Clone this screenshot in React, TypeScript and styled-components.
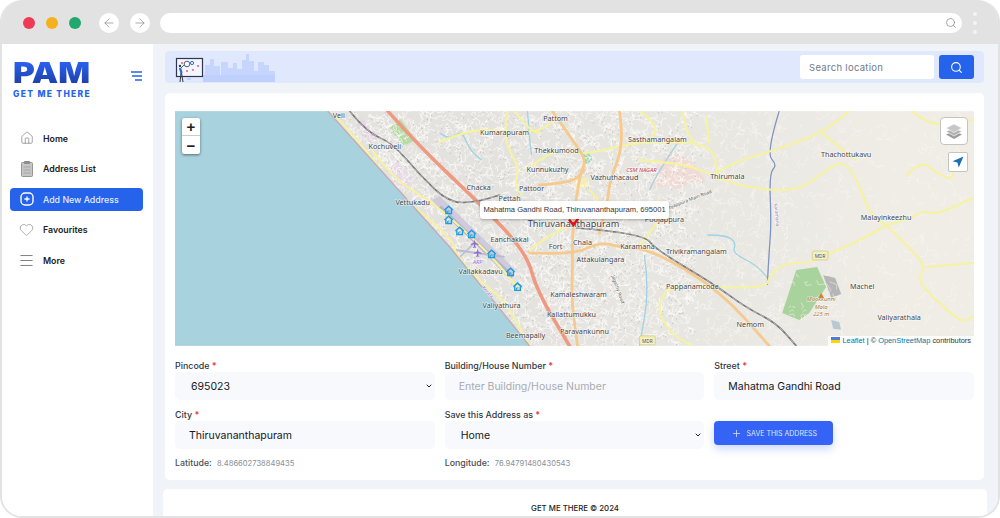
import React from "react";
import styled, { createGlobalStyle } from "styled-components";
import { ArrowLeft, ArrowRight, ChevronDown, Search, House, Heart, Menu, Plus } from "lucide-react";

const GlobalStyle = createGlobalStyle`
    html, body {
        margin: 0;
        padding: 0;
        background: #fff;
        font-family: "Inter", "Noto Sans", sans-serif;
    }
    * { box-sizing: border-box; }
`

type Pt = [number, number];

// smooth a list of points into a path
const smooth = (pts: Pt[]) => {
    let d = `M${pts[0][0]} ${pts[0][1]}`;
    for (let i = 1; i < pts.length - 1; i++) {
        const mx = (pts[i][0] + pts[i + 1][0]) / 2;
        const my = (pts[i][1] + pts[i + 1][1]) / 2;
        d += `Q${pts[i][0]} ${pts[i][1]} ${mx} ${my}`;
    }
    const last = pts[pts.length - 1];
    return d + `L${last[0]} ${last[1]}`;
};

// fake street web, seeded so every load looks the same
const makeStreets = () => {
    let seed = 4711;
    const rnd = () => {
        seed = (seed * 16807) % 2147483647;
        return seed / 2147483647;
    };
    let dense = "";
    let thin = "";
    let blocks = "";
    for (let i = 0; i < 6500; i++) {
        const x = 330 + rnd() * 645;
        const y = 111 + rnd() * 235;
        const coast = 153 + 175 + (y - 111) * 0.86;
        if (x < coast + 6) continue;
        const density = x < 690 ? 1 : x < 790 ? 0.5 : 0.16;
        if (rnd() > density) continue;
        const a = rnd() * Math.PI * 2;
        const len = 2 + rnd() * 6;
        const x2 = x + Math.cos(a) * len;
        const y2 = y + Math.sin(a) * len;
        const x3 = x2 + Math.cos(a + 1.3) * len * 0.6;
        const y3 = y2 + Math.sin(a + 1.3) * len * 0.6;
        const seg = `M${x.toFixed(1)} ${y.toFixed(1)}L${x2.toFixed(1)} ${y2.toFixed(1)}L${x3.toFixed(1)} ${y3.toFixed(1)}`;
        if (x < 700) dense += seg;
        else thin += seg;
        if (x < 700 && rnd() < 0.35) blocks += `M${x2.toFixed(1)} ${(y2 + 2).toFixed(1)}h1.2v1.2h-1.2z`;
    }
    return { dense, thin, blocks };
};

const streets = makeStreets();

const trunk: Pt[][] = [
    [[388, 111], [423, 150], [480, 203], [527, 253], [537, 290], [570, 346]],
];

const orange: Pt[][] = [
    [[553, 111], [573, 140], [587, 160], [580, 175], [573, 227], [573, 270], [572, 300], [578, 346]],
    [[620, 111], [625, 142], [610, 182], [608, 203], [600, 233]],
    [[530, 253], [573, 255], [600, 242], [620, 247], [653, 250], [720, 290], [770, 346]],
    [[540, 185], [573, 183], [585, 170]],
];

const yellow: Pt[][] = [
    [[335, 115], [373, 157], [393, 190], [425, 215], [453, 240], [457, 257], [487, 287], [505, 300], [530, 346]],
    [[372, 150], [395, 180], [430, 200], [470, 235], [497, 262], [520, 290]],
    [[440, 142], [473, 128], [507, 132], [537, 132], [553, 122]],
    [[508, 111], [503, 138], [520, 168], [515, 183], [522, 195]],
    [[515, 111], [530, 130], [540, 133]],
    [[527, 170], [553, 148], [587, 155], [623, 145], [650, 142], [713, 143], [718, 173]],
    [[683, 111], [687, 132], [695, 142]],
    [[707, 117], [710, 143]],
    [[640, 160], [683, 163], [713, 175], [743, 187], [797, 192], [823, 173], [843, 160], [857, 177], [870, 213], [887, 225]],
    [[713, 175], [740, 160], [767, 153], [823, 133], [850, 111]],
    [[823, 133], [857, 160]],
    [[887, 225], [863, 240], [830, 253], [813, 263], [783, 263], [770, 277], [767, 287], [720, 288], [670, 285], [657, 307], [670, 333], [693, 346]],
    [[887, 225], [910, 247], [927, 267], [917, 280], [940, 303], [963, 323], [974, 317]],
    [[927, 267], [974, 263]],
    [[887, 225], [910, 220], [923, 210], [937, 215], [974, 198]],
    [[913, 111], [930, 127], [974, 120]],
    [[907, 175], [923, 160], [937, 173], [953, 180], [955, 168]],
    [[640, 246], [653, 230], [662, 215], [660, 200]],
    [[530, 250], [555, 232], [572, 225]],
    [[590, 190], [600, 200], [603, 215]],
    [[640, 111], [660, 125], [650, 142]],
];

const rivers: Pt[][] = [
    [[708, 235], [727, 235], [737, 243], [733, 253], [757, 265], [770, 280]],
    [[440, 133], [450, 140], [462, 130], [470, 150], [482, 160]],
    [[528, 111], [530, 140], [532, 155]],
    [[680, 140], [660, 170], [650, 190]],
    [[645, 255], [650, 290], [640, 346]],
];

const purpleRiver: Pt[] = [[780, 111], [767, 153], [778, 165], [770, 173], [772, 223], [770, 250], [768, 285]];

const railway: Pt[][] = [
    [[350, 111], [367, 132], [393, 143], [420, 175], [450, 203], [477, 202], [500, 195]],
    [[577, 228], [643, 233], [657, 250], [713, 283], [747, 308], [777, 323], [797, 346]],
];

const homes: Pt[] = [[449, 210], [449, 220], [460, 231], [472, 234], [492, 254], [511, 272], [518, 287]];

const places: [string, number, number][] = [
    ["Veli", 339, 118], ["Kochuveli", 385, 149], ["Vettukadu", 413, 205], ["Chacka", 479, 190],
    ["Pettah", 510, 201], ["Pattoor", 532, 191], ["Kunnukuzhy", 548, 172], ["Thekkumood", 557, 153],
    ["Kumarapuram", 505, 135], ["Pattom", 556, 121], ["Eanchakkal", 510, 242], ["Fort", 556, 249],
    ["Vallakkadavu", 481, 274], ["Valiyathura", 502, 308], ["Beemapally", 526, 338], ["Kamaleshwaram", 579, 297],
    ["Kallattumukku", 572, 317], ["Paravankunnu", 585, 334], ["Attakulangara", 601, 262], ["Chala", 583, 245],
    ["Karamana", 638, 249], ["Trivikramangalam", 697, 254], ["Pappanamcode", 693, 289], ["Nemom", 751, 327],
    ["Vazhuthacaud", 615, 180], ["Sasthamangalam", 658, 142], ["Thirumala", 728, 179], ["Poojappura", 665, 222],
    ["Thachottukavu", 847, 157], ["Malayinkeezhu", 887, 220], ["Machel", 863, 289], ["Valiyarathala", 900, 320],
];

// x, top, width of each tower behind the board
const skyline: [number, number, number][] = [
    [30, 14, 5], [35, 8, 4], [39, 15, 6], [46, 11, 7], [53, 17, 5], [58, 12, 4], [62, 18, 5], [67, 9, 4], [71, 3, 3], [74, 10, 5],
    [79, 20, 4], [83, 11, 6], [89, 14, 5], [94, 20, 6],
];

const AddIcon = () => (
    <svg width="14" height="14" viewBox="0 0 14 14" fill="none" stroke="#fff">
        <rect x="1" y="1" width="12" height="12" rx="4" strokeWidth="1.4" />
        <path d="M7 4.4v5.2M4.4 7h5.2" strokeWidth="1.3" />
    </svg>
);

const ClipboardIcon = () => (
    <svg width="12" height="16" viewBox="0 0 12 16">
        <rect x="0.5" y="1.5" width="11" height="14" rx="1" fill="#c6c6c6" stroke="#8d8d8d" strokeWidth="0.9" />
        <rect x="3" y="0" width="6" height="3" rx="0.8" fill="#8d8d8d" />
        <path d="M2.5 6h7M2.5 9h7M2.5 12h7" stroke="#a2a2a2" strokeWidth="0.9" />
    </svg>
);

const navItems = [
    { label: "Home", icon: <House size={14} strokeWidth={1.2} /> },
    { label: "Address List", icon: <ClipboardIcon /> },
    { label: "Add New Address", icon: <AddIcon />, active: true },
    { label: "Favourites", icon: <Heart size={15} strokeWidth={1} /> },
    { label: "More", icon: <Menu size={17} strokeWidth={1.4} /> },
];

const Banner = () => (
    <svg width="102" height="32" viewBox="0 0 102 32">
        <g fill="#c6d5fd">
            {skyline.map(([x, y, w]) => (
                <rect key={x} x={x} y={y} width={w} height={31 - y} />
            ))}
        </g>
        <rect x="28" y="24" width="72" height="7" fill="#bed0fb" />
        <rect x="1.5" y="7.5" width="26" height="18" fill="#f3f6ff" stroke="#30364f" strokeWidth="1.2" />
        <circle cx="12" cy="13" r="2.8" fill="#fff" stroke="#30364f" strokeWidth="0.8" />
        <circle cx="17" cy="12" r="1.6" fill="none" stroke="#2f6bf0" strokeWidth="1" />
        <circle cx="7" cy="12" r="0.9" fill="#ef4a5e" />
        <circle cx="12" cy="20" r="0.9" fill="#ef4a5e" />
        <circle cx="18" cy="19" r="0.9" fill="#ef4a5e" />
        <circle cx="23" cy="15" r="0.9" fill="#ef4a5e" />
        <circle cx="5" cy="15" r="1.2" fill="#30364f" />
        <path d="M5 17l1.5 5" stroke="#2f6bf0" strokeWidth="2.4" />
        <path d="M6 17l3-3" stroke="#2f6bf0" strokeWidth="1" />
        <path d="M6 22l-1 9M6.5 22l1.5 9" stroke="#30364f" strokeWidth="1" />
        <path d="M12 28h4" stroke="#a7bdf5" strokeWidth="1" />
    </svg>
);

const MapDrawing = () => (
    <MapSvg viewBox="175 111 800 235">
        <defs>
            <linearGradient id="land" x1="0" x2="1" y1="0" y2="0">
                <stop offset="0.4" stopColor="#e4e2de" />
                <stop offset="0.68" stopColor="#e9e7e2" />
                <stop offset="0.9" stopColor="#f0ede7" />
            </linearGradient>
        </defs>
        <rect x="175" y="111" width="800" height="235" fill="url(#land)" />

        <path d="M654 188l4-22 12-14 18 6 14 14 4 10-16 0-8 8-14-4z" fill="#efdcd6" />
        <path d="M797 270l21-3 9 20-17 26-10 7-17-7z" fill="#a9d39c" />
        <path d="M396 160l18 22-10 8-16-20z" fill="#e8dbe8" />
        <path d="M362 118l18 20-8 6-16-18z" fill="#e6d6e6" />
        <path d="M400 118l16 22-12 6-14-18z" fill="#b6dca6" />
        <path d="M824 275l12 3 6 16-10 4z" fill="#b6b6b6" />
        <path d="M832 320l8 2 2 8-8-1z" fill="#b8c8d0" />
        <path d="M575 178h14v10h-14z" fill="#f3eeb8" />
        <path d="M582 154l8-3 3 10-8 3z" fill="#9fd8b0" />

        <path d={streets.dense} fill="none" stroke="#fdfcfa" strokeWidth="0.7" />
        <path d={streets.blocks} fill="#cbc8c4" />
        <path d={streets.thin} fill="none" stroke="#faf9f5" strokeWidth="0.5" />

        <path d="M432 200l8-4 75 73-7 8z" fill="#cfcbdc" />
        <path d="M440 207L513 277" stroke="#b5b3c8" strokeWidth="4" />
        <path d="M456 250L505 257" stroke="#bdbbd0" strokeWidth="2" />
        <path d="M455 262L480 238" stroke="#bdbbd0" strokeWidth="1.4" />

        {rivers.map((r, i) => <River key={i} d={smooth(r)} />)}
        <River d={smooth(purpleRiver)} $dark />

        {yellow.map((r, i) => <Road key={i} d={smooth(r)} $kind="yellow" />)}
        {orange.map((r, i) => <Road key={i} d={smooth(r)} $kind="orange" />)}
        {trunk.map((r, i) => <Road key={i} d={smooth(r)} $kind="trunk" />)}
        {railway.map((r, i) => (
            <g key={i}>
                <Road d={smooth(r)} $kind="rail" />
                <Road d={smooth(r)} $kind="railDash" />
            </g>
        ))}

        <path d="M328 111L450 247L493 300L530 346L175 346L175 111Z" fill="#a9d2df" />
        <path d="M328 111L450 247L493 300L530 346" fill="none" stroke="#c7a9b2" strokeWidth="1.4" />

        {homes.map(([x, y]) => (
            <g key={`${x}-${y}`} transform={`translate(${x} ${y})`} fill="none" stroke="#1b9be0">
                <path d="M-4.2 0L0 -3.8L4.2 0" strokeWidth="1.5" />
                <path d="M-2.8 -0.5v4h5.6v-4" strokeWidth="1.4" />
                <path d="M-1 3v-2h2" strokeWidth="0.9" />
            </g>
        ))}
        <g fill="#8c6fd6">
            <path d="M475 239.5l.8 3 3 1.6v1l-3-.8-.2 2 1 .9v.7l-1.6-.4-1.6.4v-.7l1-.9-.2-2-3 .8v-1l3-1.6z" />
            <path d="M478 248.5l.8 3 3 1.6v1l-3-.8-.2 2 1 .9v.7l-1.6-.4-1.6.4v-.7l1-.9-.2-2-3 .8v-1l3-1.6z" />
        </g>
        <Place x={478} y={264} $small $color="#8c6fd6">ARP</Place>

        {places.map(([name, x, y]) => (
            <Place key={name} x={x} y={y}>{name}</Place>
        ))}
        <Place x={642} y={172} $small $color="#c0384a">CSM NAGAR</Place>
        <Place x={822} y={301} $small $color="#a5783c">Mookkunni</Place>
        <Place x={822} y={309} $small $color="#a5783c">Mala</Place>
        <Place x={822} y={316} $small $color="#a5783c">225 m</Place>
        <path d="M822 293l3 5h-6z" fill="#d9832f" />
        <Place x={574} y={227} $big>Thiruvananthapuram</Place>

        <g transform="rotate(-21 688 200)">
            <Place x={688} y={202} $tiny $color="#555">Poojappura Main Road</Place>
        </g>
        <g transform="rotate(70 617 290)">
            <Place x={617} y={290} $tiny $color="#555">Jagathy Road</Place>
        </g>
        <g transform="rotate(85 774 215)">
            <Place x={774} y={213} $tiny $color="#9476a8">Karamana</Place>
        </g>
        <g transform="rotate(48 487 293)">
            <Place x={487} y={293} $tiny $color="#9476a8">Kerala</Place>
        </g>

        <rect x="813" y="251" width="16" height="9" rx="1.5" fill="#f1eeb0" stroke="#c8c48a" strokeWidth="0.6" />
        <Place x={821} y={258} $tiny $color="#444">MDR</Place>
        <rect x="640" y="336" width="16" height="9" rx="1.5" fill="#f1eeb0" stroke="#c8c48a" strokeWidth="0.6" />
        <Place x={648} y={343} $tiny $color="#444">MDR</Place>

        <path d="M569.5 219.5L574 225L579 218" fill="none" stroke="#e8111f" strokeWidth="2.4" />
    </MapSvg>
);

const App = () => {
    return (
        <Page>
            <GlobalStyle />
            <TopBar>
                <Dots>
                    <Dot $color="#ef3a56" />
                    <Dot $color="#f5b01e" />
                    <Dot $color="#22a86f" />
                </Dots>
                <NavCircle><ArrowLeft size={14} strokeWidth={1.2} /></NavCircle>
                <NavCircle><ArrowRight size={14} strokeWidth={1.2} /></NavCircle>
                <UrlBar><Search size={12} strokeWidth={1.5} /></UrlBar>
                <Kebab><i /><i /><i /></Kebab>
            </TopBar>
            <Body>
                <Sidebar>
                    <LogoRow>
                        <Logo>
                            <LogoMark>PAM</LogoMark>
                            <LogoTag>GET ME THERE</LogoTag>
                        </Logo>
                        <svg width="11" height="10" viewBox="0 0 11 10">
                            <path d="M0 1h11M1 5h10M4 9h7" stroke="#2563eb" strokeWidth="1.7" />
                        </svg>
                    </LogoRow>
                    <Nav>
                        {navItems.map(({ label, icon, active }) => (
                            <NavItem key={label} $active={!!active}>
                                <NavIcon>{icon}</NavIcon>
                                {label}
                            </NavItem>
                        ))}
                    </Nav>
                </Sidebar>
                <Main>
                    <Header>
                        <Banner />
                        <SearchBox>
                            <SearchInput placeholder="Search location" />
                            <SearchButton><Search size={13} strokeWidth={2} /></SearchButton>
                        </SearchBox>
                    </Header>
                    <Card>
                        <MapBox>
                            <MapDrawing />
                            <ZoomControl>
                                <ZoomButton>+</ZoomButton>
                                <ZoomButton>−</ZoomButton>
                            </ZoomControl>
                            <LayersButton>
                                <svg width="18" height="17" viewBox="0 0 18 17">
                                    <path d="M9 8L1 11.5L9 16L17 11.5Z" fill="#9b9b9b" />
                                    <path d="M9 5L1 8.5L9 13L17 8.5Z" fill="#b3b3b3" stroke="#fff" strokeWidth="0.6" />
                                    <path d="M9 1L1 5L9 9.5L17 5Z" fill="#c6c6c6" stroke="#fff" strokeWidth="0.6" />
                                </svg>
                            </LayersButton>
                            <LocateButton>
                                <svg width="12" height="12" viewBox="0 0 11 11">
                                    <path d="M10.5 0.5L0.5 4.8L5 6L6.2 10.5Z" fill="#1a6fb5" />
                                </svg>
                            </LocateButton>
                            <Tooltip>Mahatma Gandhi Road, Thiruvananthapuram, 695001</Tooltip>
                            <Attribution>
                                <svg width="9" height="6" viewBox="0 0 9 6">
                                    <rect width="9" height="3" fill="#4c7be1" />
                                    <rect y="3" width="9" height="3" fill="#ffd500" />
                                </svg>
                                <a> Leaflet</a> | © <a>OpenStreetMap</a> contributors
                            </Attribution>
                        </MapBox>
                        <Form>
                            <Field>
                                <Label>Pincode <b>*</b></Label>
                                <SelectWrap>
                                    <Select defaultValue="695023">
                                        <option>695023</option>
                                    </Select>
                                    <ChevronDown size={8} strokeWidth={3} />
                                </SelectWrap>
                            </Field>
                            <Field>
                                <Label>Building/House Number <b>*</b></Label>
                                <Input placeholder="Enter Building/House Number" />
                            </Field>
                            <Field>
                                <Label>Street <b>*</b></Label>
                                <Input defaultValue="Mahatma Gandhi Road" />
                            </Field>
                            <Field>
                                <Label>City <b>*</b></Label>
                                <Input defaultValue="Thiruvananthapuram" />
                            </Field>
                            <Field>
                                <Label>Save this Address as <b>*</b></Label>
                                <SelectWrap>
                                    <Select defaultValue="Home">
                                        <option>Home</option>
                                    </Select>
                                    <ChevronDown size={8} strokeWidth={3} />
                                </SelectWrap>
                            </Field>
                            <SaveCell>
                                <SaveButton><Plus size={11} strokeWidth={1.6} />SAVE THIS ADDRESS</SaveButton>
                            </SaveCell>
                            <Coord>Latitude: <span>8.486602738849435</span></Coord>
                            <Coord>Longitude: <span>76.94791480430543</span></Coord>
                        </Form>
                    </Card>
                    <Footer>GET ME THERE © 2024</Footer>
                </Main>
            </Body>
        </Page>
    )
}

const Page = styled.div`
    width: 1000px;
    height: 518px;
    overflow: hidden;
    border: 2px solid #e2e2e2;
    border-top: 0;
    border-radius: 22px;
    background: #fff;
    display: flex;
    flex-direction: column;
`

const TopBar = styled.div`
    height: 44px;
    flex: none;
    background: #e2e2e2;
    display: flex;
    align-items: center;
    padding: 2px 0 0 21px;
`

const Dots = styled.div`
    display: flex;
    gap: 11px;
    margin-right: 18px;
`

const Dot = styled.span<{ $color: string }>`
    width: 12px;
    height: 12px;
    border-radius: 50%;
    background: ${p => p.$color};
`

const NavCircle = styled.div`
    width: 20px;
    height: 20px;
    margin: 0 11px 0 0;
    border-radius: 50%;
    background: #fff;
    color: #8a8a8a;
    display: flex;
    align-items: center;
    justify-content: center;
`

const UrlBar = styled.div`
    width: 802px;
    height: 20px;
    margin-left: -1px;
    border-radius: 10px;
    background: #fff;
    color: #8a8a8a;
    display: flex;
    align-items: center;
    justify-content: flex-end;
    padding-right: 5px;
`

const Kebab = styled.div`
    display: flex;
    flex-direction: column;
    gap: 5px;
    margin-left: 11px;
    i {
        width: 4px;
        height: 4px;
        border-radius: 50%;
        background: #f4f4f4;
    }
`

const Body = styled.div`
    flex: 1;
    min-height: 0;
    display: flex;
`

const Sidebar = styled.aside`
    width: 151px;
    flex: none;
    background: #fff;
    padding: 17px 10px 0 8px;
`

const LogoRow = styled.div`
    display: flex;
    align-items: flex-start;
    justify-content: space-between;
    padding: 0 1px 0 3px;
    svg {
        margin-top: 10px;
    }
`

const Logo = styled.div`
    display: flex;
    flex-direction: column;
`

const LogoMark = styled.div`
    font-size: 28px;
    line-height: 24px;
    font-weight: 900;
    width: 64px;
    transform: scaleX(1.19);
    transform-origin: left;
    background: linear-gradient(180deg, #2b62f2 0%, #1d3ea6 100%);
    -webkit-background-clip: text;
    background-clip: text;
    color: transparent;
`

const LogoTag = styled.div`
    font-size: 8.5px;
    font-weight: 800;
    line-height: 10px;
    letter-spacing: 1.3px;
    color: #2563eb;
    margin-top: 4px;
    white-space: nowrap;
`

const Nav = styled.nav`
    display: flex;
    flex-direction: column;
    gap: 7.5px;
    margin-top: 28px;
`

const NavItem = styled.div<{ $active: boolean }>`
    height: 23px;
    display: flex;
    align-items: center;
    gap: 8px;
    padding: 0 0 1px 8px;
    border-radius: 4px;
    font-size: 8.8px;
    font-weight: ${p => (p.$active ? 500 : 600)};
    background: ${p => (p.$active ? "#2563eb" : "transparent")};
    color: ${p => (p.$active ? "#e6edff" : "#222")};
    svg {
        color: #808080;
    }
`

const NavIcon = styled.span`
    width: 17px;
    display: flex;
    justify-content: center;
`

const Main = styled.main`
    flex: 1;
    min-width: 0;
    background: #f0f4f9;
    padding: 7px 14px 0 12px;
    display: flex;
    flex-direction: column;
`

const Header = styled.header`
    height: 32px;
    flex: none;
    background: #e0e8fd;
    border-radius: 4px;
    display: flex;
    align-items: center;
    justify-content: space-between;
    padding: 0 10px;
`

const SearchBox = styled.div`
    display: flex;
    gap: 5px;
`

const SearchInput = styled.input`
    width: 134px;
    height: 24px;
    border: 0;
    border-radius: 3px;
    background: #fff;
    padding: 0 9px;
    font-family: inherit;
    font-size: 9.5px;
    letter-spacing: 0.3px;
    outline: none;
    &::placeholder {
        color: #737a8c;
        opacity: 1;
    }
`

const SearchButton = styled.button`
    width: 35px;
    height: 24px;
    border: 0;
    padding: 0;
    border-radius: 3px;
    background: #2563eb;
    color: #fff;
    display: flex;
    align-items: center;
    justify-content: center;
`

const Card = styled.section`
    height: 387px;
    flex: none;
    margin-top: 10px;
    background: #fff;
    border-radius: 5px;
    padding: 18px 10px 0;
`

const MapBox = styled.div`
    position: relative;
    height: 235px;
    overflow: hidden;
`

const MapSvg = styled.svg`
    display: block;
    width: 100%;
    height: 100%;
`

const roadStyles = {
    yellow: "stroke: #f5f2a0; stroke-width: 2.1;",
    orange: "stroke: #f6c98d; stroke-width: 2.8;",
    trunk: "stroke: #ee9a82; stroke-width: 3.6;",
    rail: "stroke: #777; stroke-width: 1.6;",
    railDash: "stroke: #cfcfcf; stroke-width: 0.7; stroke-dasharray: 4 4;",
};

const Road = styled.path<{ $kind: keyof typeof roadStyles }>`
    fill: none;
    stroke-linejoin: round;
    stroke-linecap: round;
    ${p => roadStyles[p.$kind]}
`

const River = styled.path<{ $dark?: boolean }>`
    fill: none;
    stroke: ${p => (p.$dark ? "#7e93bf" : "#9fd3e3")};
    stroke-width: 1.3;
`

const Place = styled.text<{ $small?: boolean; $tiny?: boolean; $big?: boolean; $color?: string }>`
    font-family: "Noto Sans", "DejaVu Sans", sans-serif;
    font-size: ${p => (p.$big ? "9.2px" : p.$small ? "5.8px" : p.$tiny ? "4.8px" : "7.2px")};
    font-style: ${p => (p.$small ? "italic" : "normal")};
    fill: ${p => p.$color || "#454545"};
    text-anchor: middle;
    stroke: rgba(255, 255, 255, 0.7);
    stroke-width: 1.2px;
    paint-order: stroke;
`

const ZoomControl = styled.div`
    position: absolute;
    left: 7px;
    top: 7px;
    width: 18px;
    border-radius: 2px;
    background: #fff;
    box-shadow: 0 1px 3px rgba(0, 0, 0, 0.5);
`

const ZoomButton = styled.div`
    height: 18px;
    display: flex;
    align-items: center;
    justify-content: center;
    font-family: "Liberation Sans", sans-serif;
    font-size: 15px;
    font-weight: 700;
    color: #222;
    &:first-child {
        border-bottom: 1px solid #ccc;
    }
`

const LayersButton = styled.div`
    position: absolute;
    right: 6px;
    top: 6px;
    width: 28px;
    height: 28px;
    border: 1px solid #c4c4c0;
    border-radius: 4px;
    background: #fff;
    display: flex;
    align-items: center;
    justify-content: center;
`

const LocateButton = styled.div`
    position: absolute;
    right: 6px;
    top: 41px;
    width: 20px;
    height: 20px;
    border: 1px solid #c4c4c0;
    border-radius: 2px;
    background: #fff;
    display: flex;
    align-items: center;
    justify-content: center;
`

const Tooltip = styled.div`
    position: absolute;
    left: 305px;
    top: 90px;
    height: 18px;
    width: 189px;
    border-radius: 3px;
    background: #fff;
    color: #333;
    font-family: "Liberation Sans", sans-serif;
    font-size: 7.6px;
    line-height: 18px;
    text-align: center;
    white-space: nowrap;
    box-shadow: 0 1px 3px rgba(0, 0, 0, 0.3);
`

const Attribution = styled.div`
    position: absolute;
    right: 0;
    bottom: 0;
    height: 10px;
    padding: 0 3px;
    background: rgba(255, 255, 255, 0.85);
    color: #333;
    font-family: "Liberation Sans", sans-serif;
    font-size: 7.4px;
    line-height: 10px;
    white-space: pre;
    a {
        color: #0078a8;
    }
`

const Form = styled.div`
    display: grid;
    grid-template-columns: repeat(3, 1fr);
    column-gap: 10px;
    row-gap: 9px;
    margin-top: 14px;
`

const Field = styled.label`
    display: flex;
    flex-direction: column;
    gap: 1px;
`

const Label = styled.span`
    font-size: 8.9px;
    line-height: 11px;
    font-weight: 500;
    color: #33363f;
    b {
        color: #ef3a4a;
    }
`

const controlStyles = `
    height: 28px;
    width: 100%;
    border: 0;
    border-radius: 5px;
    background: #f8f9fc;
    font-family: inherit;
    font-size: 10.5px;
    color: #15171c;
    outline: none;
`

const Input = styled.input`
    ${controlStyles}
    padding: 0 14px;
    &::placeholder {
        color: #a8abb3;
        opacity: 1;
    }
`

const SelectWrap = styled.div`
    position: relative;
    svg {
        position: absolute;
        right: 2px;
        top: 10px;
        color: #222;
        pointer-events: none;
    }
`

const Select = styled.select`
    ${controlStyles}
    display: block;
    appearance: none;
    padding: 0 0 0 16px;
`

const SaveCell = styled.div`
    padding-top: 12px;
`

const SaveButton = styled.button`
    width: 119px;
    height: 24px;
    border: 0;
    border-radius: 4px;
    padding: 0;
    background: #3563f5;
    color: #dfe7ff;
    box-shadow: 0 4px 8px rgba(53, 99, 245, 0.25);
    font-family: inherit;
    font-size: 7px;
    font-weight: 400;
    display: flex;
    align-items: center;
    justify-content: center;
    gap: 5px;
`

const Coord = styled.div`
    font-size: 8.8px;
    line-height: 10px;
    font-weight: 500;
    color: #4a4d57;
    span {
        font-size: 7.6px;
        font-weight: 400;
        color: #8a8f9c;
        margin-left: 3px;
    }
`

const Footer = styled.footer`
    flex: 1;
    margin: 9px -3px 0 -2px;
    background: #fff;
    border-radius: 5px 5px 0 0;
    padding-top: 14px;
    text-align: center;
    font-size: 7.8px;
    line-height: 10px;
    font-weight: 500;
    color: #222;
`

export default App;
